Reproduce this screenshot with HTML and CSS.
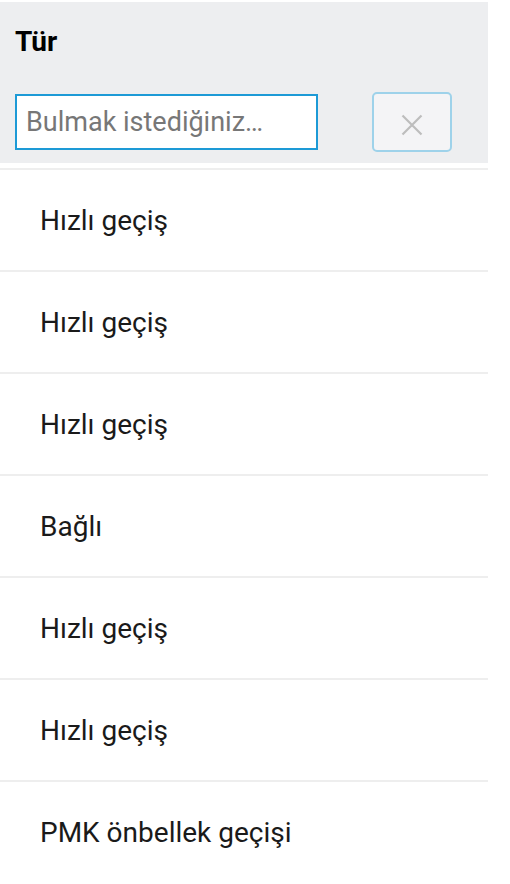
FILE: index.html
```html
<!DOCTYPE html>
<html lang="tr">
<head>
  <meta charset="UTF-8" />
  <meta name="viewport" content="width=device-width, initial-scale=1.0"/>
  <title>Tür</title>
  <link rel="stylesheet" href="styles.css">
</head>
<body>

  <div class="panel">
    <div class="filter-header">
      <h2 class="filter-title">Tür</h2>
      <div class="search-row">
        <input type="text" class="search-input" placeholder="Bulmak istediğiniz…" />
        <button class="clear-btn" aria-label="Temizle">
          <svg width="22" height="22" viewBox="0 0 22 22">
            <path d="M1.5 1.5 L20.5 20.5 M20.5 1.5 L1.5 20.5" stroke="#bdbdbd" stroke-width="2.2" fill="none"/>
          </svg>
        </button>
      </div>
    </div>

    <ul class="type-list">
      <li>Hızlı geçiş</li>
      <li>Hızlı geçiş</li>
      <li>Hızlı geçiş</li>
      <li>Bağlı</li>
      <li>Hızlı geçiş</li>
      <li>Hızlı geçiş</li>
      <li>PMK önbellek geçişi</li>
    </ul>
  </div>

</body>
</html>
```

FILE: styles.css
```css
body {
  margin: 0;
  padding-top: 2px;
  background-color: #fff;
  font-family: Roboto, "Noto Sans", Arial, sans-serif;
  color: #1a1a1a;
}

.panel {
  width: 488px;
}

.filter-header {
  background-color: #edeef0;
  padding: 23px 15px 11px 15px;
}

.filter-title {
  margin: 0 0 33px 0;
  font-size: 28px;
  line-height: 34px;
  font-weight: 700;
  color: #000;
}

.search-row {
  display: flex;
  align-items: center;
}

.search-input {
  box-sizing: border-box;
  width: 303px;
  height: 56px;
  padding: 0 9px;
  border: 2px solid #1d9ad6;
  border-radius: 0;
  background-color: #fff;
  font-family: Roboto, "Noto Sans", Arial, sans-serif;
  font-size: 27px;
  color: #333;
  outline: none;
}

.search-input::placeholder {
  color: #777;
}

.clear-btn {
  box-sizing: border-box;
  width: 80px;
  height: 60px;
  margin-left: 54px;
  padding: 6px 0 0 0;
  border: 2px solid #9ed2ea;
  border-radius: 5px;
  background-color: #f4f4f6;
  display: flex;
  align-items: center;
  justify-content: center;
  cursor: pointer;
}

.type-list {
  list-style: none;
  margin: 5px 0 0 0;
  padding: 0;
}

.type-list li {
  height: 100px;
  display: flex;
  align-items: center;
  padding-left: 40px;
  border-top: 2px solid #eeeeee;
  font-size: 28px;
  color: #1a1a1a;
}
```
